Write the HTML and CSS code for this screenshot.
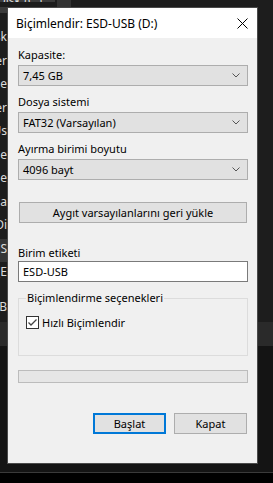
FILE: index.html
```html
<!DOCTYPE html>
<html lang="tr">
<head>
  <meta charset="UTF-8" />
  <meta name="viewport" content="width=device-width, initial-scale=1.0"/>
  <title>Biçimlendir: ESD-USB (D:)</title>
  <link rel="stylesheet" href="styles.css">
</head>
<body>

  <div class="desktop">

    <!-- Explorer behind the dialog -->
    <div class="topbar">
      <div class="top-cell">Disk (C:)</div>
      <div class="top-cell small"></div>
    </div>

    <div class="main">
      <div class="side">
        <div class="side-top"></div>
        <div class="side-item" style="margin-top: 14px">Yerel Disk</div>
        <div class="side-item">Belgeler</div>
        <div class="side-item">Resimle</div>
        <div class="side-item">Klasörler</div>
        <div class="side-item">Müzik Üs</div>
        <div class="side-item">Belgele</div>
        <div class="side-item">Resimle</div>
        <div class="side-item">Klasörla</div>
        <div class="side-item">Yerel Di</div>
        <div class="side-item active">ESD-US</div>
        <div class="side-item">Yeni (E</div>
        <div class="side-item" style="margin-top: 11px">B</div>
      </div>

      <!-- Format Dialog -->
      <div class="dialog">
        <div class="titlebar">
          <span class="title">Biçimlendir: ESD-USB (D:)</span>
          <svg class="close" width="11" height="11" viewBox="0 0 11 11">
            <path d="M0.5 0.5 L10.5 10.5 M10.5 0.5 L0.5 10.5" stroke="#000" stroke-width="1" fill="none"/>
          </svg>
        </div>

        <div class="dialog-body">
          <div class="label first">Kapasite:</div>
          <div class="select">
            <span>7,45 GB</span>
            <svg width="8" height="5" viewBox="0 0 8 5"><path d="M0.5 0.5 L4 4 L7.5 0.5" stroke="#555" fill="none"/></svg>
          </div>

          <div class="label">Dosya sistemi</div>
          <div class="select">
            <span>FAT32 (Varsayılan)</span>
            <svg width="8" height="5" viewBox="0 0 8 5"><path d="M0.5 0.5 L4 4 L7.5 0.5" stroke="#555" fill="none"/></svg>
          </div>

          <div class="label">Ayırma birimi boyutu</div>
          <div class="select">
            <span>4096 bayt</span>
            <svg width="8" height="5" viewBox="0 0 8 5"><path d="M0.5 0.5 L4 4 L7.5 0.5" stroke="#555" fill="none"/></svg>
          </div>

          <div class="button wide">Aygıt varsayılanlarını geri yükle</div>

          <div class="label gap">Birim etiketi</div>
          <div class="textbox">ESD-USB</div>

          <div class="group">
            <div class="legend">Biçimlendirme seçenekleri</div>
            <div class="check-row">
              <div class="checkbox">
                <svg width="11" height="11" viewBox="0 0 11 11"><path d="M1.5 5.5 L4 8 L9.5 2.5" stroke="#444" stroke-width="1.3" fill="none"/></svg>
              </div>
              <span>Hızlı Biçimlendir</span>
            </div>
          </div>

          <div class="progress"></div>

          <div class="actions">
            <div class="button default">Başlat</div>
            <div class="button">Kapat</div>
          </div>
        </div>
      </div>

      <div class="rside"></div>
    </div>
  </div>

  <div class="taskbar"></div>

</body>
</html>
```

FILE: styles.css
```css
* { box-sizing: border-box; }
body {
  margin: 0;
  width: 273px;
  height: 483px;
  overflow: hidden;
  background: #000;
  font-family: 'Noto Sans', sans-serif;
  font-size: 11px;
  color: #000;
}

.desktop {
  height: 472px;
  overflow: hidden;
  background: linear-gradient(to bottom, #1d1d1d 0, #1d1d1d 322px, #2a2a2a 322px, #2a2a2a 346px, #141414 346px);
}

.topbar {
  display: flex;
  height: 7px;
  overflow: hidden;
}

.top-cell {
  width: 55px;
  height: 7px;
  background: #3b3b3b;
  color: #ddd;
  font-size: 12px;
  line-height: 12px;
  margin-top: -5px;
  padding-left: 0;
  text-indent: -3px;
  white-space: nowrap;
  overflow: hidden;
}

.top-cell.small {
  width: 14px;
  margin-left: 2px;
  margin-top: 0;
  background: #333;
}

/* Main row */
.main {
  display: flex;
  align-items: flex-start;
}

.side {
  width: 7px;
  overflow: hidden;
  display: flex;
  flex-direction: column;
}

.side-top {
  height: 6px;
  background: #3b3b3b;
}

.side-item {
  display: flex;
  justify-content: flex-end;
  white-space: nowrap;
  height: 23.5px;
  line-height: 20px;
  color: #dcdcdc;
  font-size: 12px;
}

.side-item.active {
  background: #353535;
}

.rside {
  flex: 1;
}

/* Dialog */
.dialog {
  width: 251px;
  border: 1px solid #4a4a4a;
  background: #f0f0f0;
}

.titlebar {
  height: 30px;
  background: #fff;
  display: flex;
  align-items: center;
  justify-content: space-between;
  padding: 0 9px 0 8px;
  font-size: 12px;
}

.close {
  margin-top: 1px;
}

.dialog-body {
  padding: 0 9px 29px 10px;
}

.label {
  line-height: 15px;
  margin-top: 8px;
  margin-bottom: 3px;
}

.label.first {
  margin-top: 9px;
}

.label.gap {
  margin-top: 22px;
  margin-bottom: 1px;
}

.select {
  height: 21px;
  background: #e1e1e1;
  border: 1px solid #adadad;
  display: flex;
  align-items: center;
  justify-content: space-between;
  padding: 0 7px 0 4px;
}

.button {
  height: 21px;
  background: #e1e1e1;
  border: 1px solid #adadad;
  display: flex;
  align-items: center;
  justify-content: center;
}

.button.wide {
  margin: 22px 1px 0 1px;
}

.textbox {
  height: 21px;
  background: #fff;
  border: 1px solid #7a7a7a;
  display: flex;
  align-items: center;
  padding-left: 4px;
}

.group {
  margin-top: 16px;
  height: 58px;
  border: 1px solid #dcdcdc;
  padding: 0 7px;
}

.legend {
  display: inline-block;
  background: #f0f0f0;
  padding: 0 1px;
  margin-left: 0;
  margin-top: -9px;
  line-height: 15px;
  vertical-align: top;
}

.check-row {
  display: flex;
  align-items: center;
  gap: 3px;
  margin-top: 1px;
}

.checkbox {
  width: 13px;
  height: 13px;
  border: 1px solid #333;
  background: #fff;
  display: flex;
  align-items: center;
  justify-content: center;
}

.progress {
  margin-top: 14px;
  height: 13px;
  background: #e6e6e6;
  border: 1px solid #bcbcbc;
}

.actions {
  display: flex;
  justify-content: flex-end;
  gap: 8px;
  margin-top: 30px;
  padding-right: 1px;
}

.actions .button {
  width: 73px;
}

.button.default {
  border: 2px solid #0078d7;
}

.taskbar {
  height: 11px;
  border-top: 1px solid #3a3a3a;
  background: #000;
}
```
